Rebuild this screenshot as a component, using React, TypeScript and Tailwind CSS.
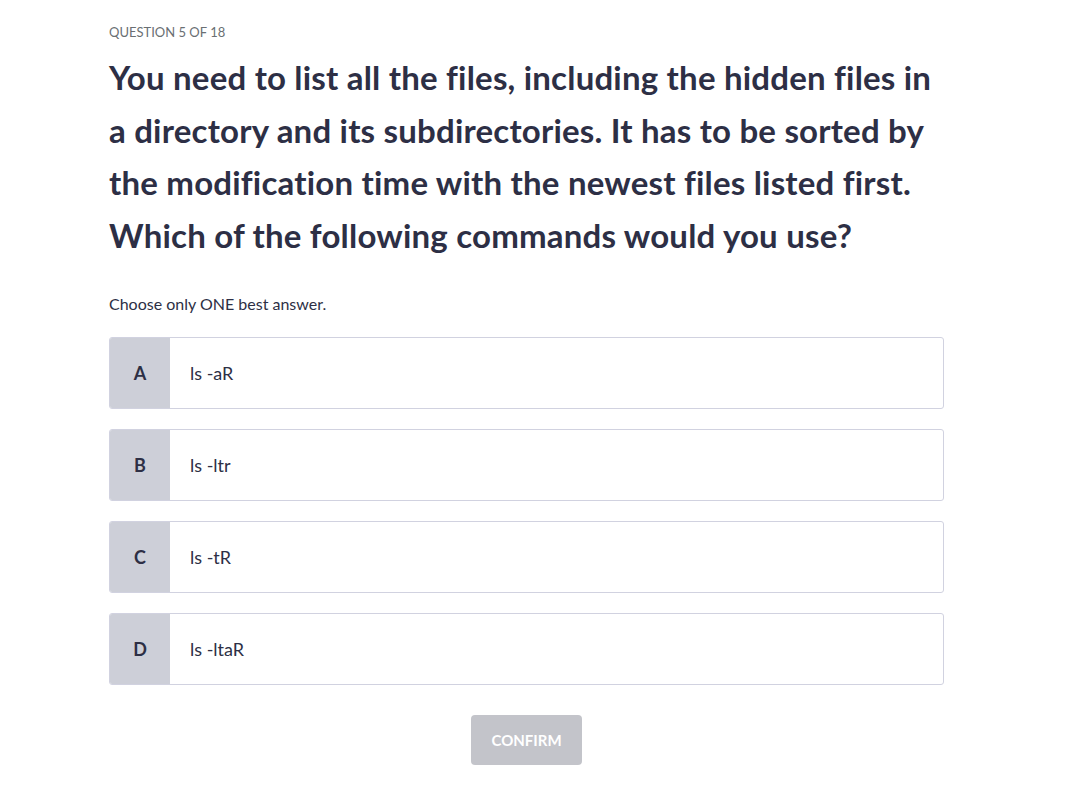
const options = [
  { key: "A", text: "ls -aR" },
  { key: "B", text: "ls -ltr" },
  { key: "C", text: "ls -tR" },
  { key: "D", text: "ls -ltaR" },
];

export default function App() {
  return (
    <div className="min-h-screen bg-white font-['Lato',sans-serif] text-[#2d2f45]">
      <div className="w-[835px] ml-[109px] pt-[22px]">
        <div className="text-[13px] leading-[20px] text-[#6a6f73] uppercase">
          Question 5 of 18
        </div>
        <h1 className="mt-[9px] mb-[1px] text-[33px] leading-[52.5px] font-bold tracking-[0.2px] text-[#2d2f45]">
          You need to list all the files, including the hidden files in
          <br />
          a directory and its subdirectories. It has to be sorted by
          <br />
          the modification time with the newest files listed first.
          <br />
          Which of the following commands would you use?
        </h1>
        <p className="mt-[33px] text-[16px] leading-[20px] text-[#2d2f45]">
          Choose only ONE best answer.
        </p>
        <div className="mt-[23px] flex flex-col gap-[20px]">
          {options.map((o) => (
            <button
              key={o.key}
              className="flex h-[72px] w-full overflow-hidden rounded-[3px] border border-[#d1d2e0] bg-white text-left"
            >
              <span className="flex w-[60px] shrink-0 items-center justify-center bg-[#cdcfd8] text-[18px] font-bold text-[#2d2f45]">
                {o.key}
              </span>
              <span className="flex items-center pl-[20px] text-[18px] text-[#2d2f45]">
                {o.text}
              </span>
            </button>
          ))}
        </div>
        <div className="mt-[30px] flex justify-center">
          <button className="h-[50px] w-[111px] rounded-[4px] bg-[#c3c4ca] text-[15px] font-bold text-white">
            CONFIRM
          </button>
        </div>
      </div>
    </div>
  );
}
